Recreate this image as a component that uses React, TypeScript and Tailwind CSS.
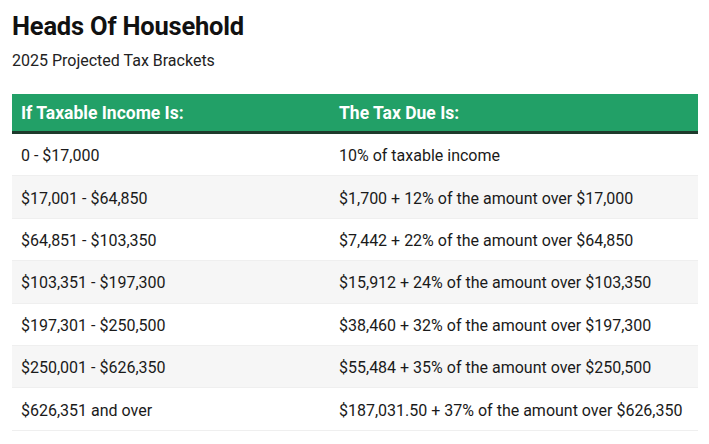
import React from "react";

const rows: [string, string][] = [
  ["0 - $17,000", "10% of taxable income"],
  ["$17,001 - $64,850", "$1,700 + 12% of the amount over $17,000"],
  ["$64,851 - $103,350", "$7,442 + 22% of the amount over $64,850"],
  ["$103,351 - $197,300", "$15,912 + 24% of the amount over $103,350"],
  ["$197,301 - $250,500", "$38,460 + 32% of the amount over $197,300"],
  ["$250,001 - $626,350", "$55,484 + 35% of the amount over $250,500"],
  ["$626,351 and over", "$187,031.50 + 37% of the amount over $626,350"],
];

export default function App() {
  return (
    <div className="w-[709px] h-[444px] bg-white overflow-hidden text-[#111] font-['Roboto',sans-serif] px-[12px] pt-[11px]">
      <h1 className="text-[25.5px] font-bold leading-[30px] tracking-[-0.2px]">Heads Of Household</h1>
      <p className="text-[16px] leading-[20px] mt-[10px] text-[#222]">2025 Projected Tax Brackets</p>
      <div className="mt-[23px] w-[686px]">
        <div className="flex bg-[#22a067] border-b-[3px] border-[#1e3a2c] h-[40px] items-center text-white font-bold text-[17.5px] pt-[1px]">
          <div className="w-[318px] pl-[9px]">If Taxable Income Is:</div>
          <div className="flex-1 pl-[9px]">The Tax Due Is:</div>
        </div>
        {rows.map((r, i) => (
          <div
            key={i}
            className={`flex h-[42.4px] items-center pt-[3px] text-[16px] text-[#1a1a1a] border-b border-[#efefef] ${i % 2 === 1 ? "bg-[#f6f6f6]" : "bg-white"}`}
          >
            <div className="w-[318px] pl-[9px]">{r[0]}</div>
            <div className="flex-1 pl-[9px]">{r[1]}</div>
          </div>
        ))}
      </div>
    </div>
  );
}
